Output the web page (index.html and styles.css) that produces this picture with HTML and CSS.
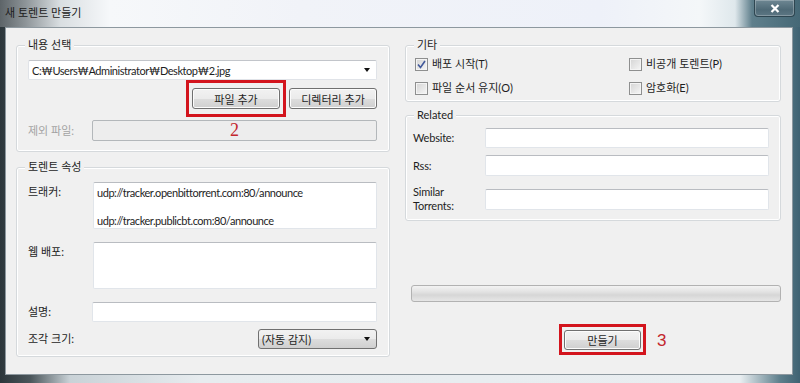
FILE: index.html
```html
<!DOCTYPE html>
<html lang="ko">
<head>
    <meta charset="UTF-8">
    <meta name="viewport" content="width=device-width, initial-scale=1.0">
    <title>새 토렌트 만들기</title>
    <link rel="stylesheet" href="styles.css">
</head>
<body>
    <div class="window">
        <div class="titlebar">
            <span class="title">새 토렌트 만들기</span>
            <div class="close">
                <svg width="10" height="9" viewBox="0 0 10 9"><path d="M1.5 1 L8.5 8 M8.5 1 L1.5 8" stroke="#fff" stroke-width="2.2"/></svg>
            </div>
        </div>

        <div class="client">
            <!-- 왼쪽 -->
            <div class="col col-left">
                <fieldset class="group group-content">
                    <legend>내용 선택</legend>
                    <div class="combo">
                        <span class="latin">C:₩Users₩Administrator₩Desktop₩2.jpg</span>
                        <span class="arrow"></span>
                    </div>
                    <div class="btn-row">
                        <button class="btn marked mark-file">파일 추가</button>
                        <button class="btn">디렉터리 추가</button>
                    </div>
                    <div class="row">
                        <label class="lbl muted">제외 파일:</label>
                        <div class="field field-disabled"><span class="note">2</span></div>
                    </div>
                </fieldset>

                <fieldset class="group group-props">
                    <legend>토렌트 속성</legend>
                    <div class="row row-top">
                        <label class="lbl">트래커:</label>
                        <textarea class="area latin">udp://tracker.openbittorrent.com:80/announce

udp://tracker.publicbt.com:80/announce</textarea>
                    </div>
                    <div class="row row-top row-gap">
                        <label class="lbl">웹 배포:</label>
                        <textarea class="area"></textarea>
                    </div>
                    <div class="row row-gap">
                        <label class="lbl">설명:</label>
                        <input class="field" type="text">
                    </div>
                    <div class="row row-piece">
                        <label class="lbl">조각 크기:</label>
                        <div class="select">
                            <span>(자동 감지)</span>
                            <span class="arrow"></span>
                        </div>
                    </div>
                </fieldset>
            </div>

            <!-- 오른쪽 -->
            <div class="col col-right">
                <fieldset class="group group-etc">
                    <legend>기타</legend>
                    <div class="checks">
                        <label class="check">
                            <span class="box">
                                <svg width="11" height="11" viewBox="0 0 11 11"><path d="M2 5.5 L4.5 8.5 L9 2" fill="none" stroke="#41589a" stroke-width="1.6"/></svg>
                            </span>
                            배포 시작(T)
                        </label>
                        <label class="check"><span class="box"></span>비공개 토렌트(P)</label>
                        <label class="check"><span class="box"></span>파일 순서 유지(O)</label>
                        <label class="check"><span class="box"></span>암호화(E)</label>
                    </div>
                </fieldset>

                <fieldset class="group group-related">
                    <legend>Related</legend>
                    <div class="row">
                        <label class="lbl lbl-wide">Website:</label>
                        <input class="field" type="text">
                    </div>
                    <div class="row row-rss">
                        <label class="lbl lbl-wide">Rss:</label>
                        <input class="field field-tall" type="text">
                    </div>
                    <div class="row row-similar">
                        <label class="lbl lbl-wide lbl-two">Similar<br>Torrents:</label>
                        <input class="field field-tall" type="text">
                    </div>
                </fieldset>

                <div class="progress"></div>

                <div class="make-row">
                    <button class="btn btn-make marked mark-make">만들기</button>
                    <span class="note note-3">3</span>
                </div>
            </div>
        </div>
    </div>
</body>
</html>
```

FILE: styles.css
```css
body {
    margin: 0;
    font-family: Lato, "Noto Sans CJK KR", sans-serif;
    font-size: 11px;
    color: #1e1e1e;
    overflow: hidden;
}
.window {
    width: 800px;
    height: 383px;
    display: flex;
    flex-direction: column;
    background: linear-gradient(to right, #2c363b 0, #4a555a 30px, #c9d2d7 70px, #e7ecef 200px, #e9eef1 740px, #5e7f8c 780px, #3f6272 800px);
}
.titlebar {
    height: 27px;
    display: flex;
    align-items: flex-start;
    background: linear-gradient(to right, #5d6468 0, #8c9397 25px, #d9dee1 60px, #f6f8fa 110px, #f1f3f8 300px, #eef1f9 600px, #f4f7f9 700px, #dfe8ec 735px, #5f7f8c 752px, #456876 800px);
}
.title {
    padding-left: 5px;
    line-height: 26px;
    font-size: 11px;
    color: #1b1b1b;
}
.close {
    margin-left: auto;
    margin-right: 5px;
    width: 41px;
    height: 17px;
    box-sizing: border-box;
    display: flex;
    align-items: center;
    justify-content: center;
    background: linear-gradient(#6e8793, #4f6a77 60%, #5c7683);
    border: 1px solid #2e4651;
    border-top: none;
    border-radius: 0 0 4px 4px;
    box-shadow: inset 0 0 0 1px rgba(255,255,255,0.25);
}
.client {
    flex: 1;
    margin: 0 7px 8px 5px;
    background-color: #f0f0f0;
    border: 1px solid #8d989f;
    display: flex;
    padding: 9px 0 0 10px;
    gap: 15px;
}
.col {
    display: flex;
    flex-direction: column;
}
.col-left {
    width: 374px;
}
.col-right {
    width: 376px;
}
.latin {
    letter-spacing: -0.45px;
}

/* 그룹 상자 */
.group {
    margin: 0;
    border: 1px solid #d5d9dc;
    border-radius: 3px;
    box-shadow: inset 0 0 0 1px #ffffff;
    padding: 7px 12px 10px 11px;
    min-width: 0;
}
.group legend {
    padding: 0 3px;
    margin-left: -3px;
    line-height: 16px;
    background-color: #f0f0f0;
}
.group-props {
    margin-top: 7px;
    padding-bottom: 7px;
}
.group-etc {
    padding: 3px 10px 5px 9px;
}
.group-etc legend {
    margin-left: -1px;
}
.group-related {
    margin-top: 5px;
    padding: 5px 11px 7px 7px;
}
.group-related legend {
    margin-left: 1px;
}

/* 콤보, 입력 */
.combo {
    height: 20px;
    box-sizing: border-box;
    display: flex;
    align-items: center;
    justify-content: space-between;
    padding: 0 6px 0 3px;
    background-color: #fff;
    border: 1px solid #e0e3e8;
    border-top-color: #c2c5ca;
    border-radius: 2px;
}
.arrow {
    width: 0;
    height: 0;
    border-top: 4px solid #111;
    border-left: 3.5px solid transparent;
    border-right: 3.5px solid transparent;
}
.btn-row {
    display: flex;
    justify-content: flex-end;
    gap: 9px;
    margin-top: 8px;
}
.btn {
    position: relative;
    width: 88px;
    height: 21px;
    padding: 0;
    font-family: inherit;
    font-size: 11px;
    color: #1e1e1e;
    border: 1px solid #707070;
    border-radius: 3px;
    background: linear-gradient(#f2f2f2 0, #ebebeb 50%, #dddddd 51%, #cfcfcf 100%);
    box-shadow: inset 0 0 0 1px #fcfcfc;
}
.marked::after {
    content: '';
    position: absolute;
    border: 3px solid #d3141d;
}
.mark-file::after {
    inset: -9px -7px;
}
.mark-make::after {
    inset: -7px -6px -6px -6px;
}
.row {
    display: flex;
    align-items: center;
    margin-top: 11px;
}
.row-top {
    align-items: flex-start;
    margin-top: 0;
}
.row-gap {
    margin-top: 13px;
}
.row-piece {
    margin-top: 7px;
    justify-content: space-between;
}
.group-related .row {
    margin-top: 0;
}
.group-related .row-rss {
    margin-top: 7px;
}
.group-related .row-similar {
    margin-top: 9px;
}
.lbl {
    width: 64px;
    flex-shrink: 0;
    line-height: 16px;
}
.row-top .lbl {
    padding-top: 2px;
    width: 65px;
}
.lbl-wide {
    width: 72px;
    letter-spacing: -0.2px;
}
.lbl-two {
    line-height: 14px;
}
.muted {
    color: #a3a3a3;
}
.field {
    flex: 1;
    height: 20px;
    box-sizing: border-box;
    margin: 0;
    background-color: #fff;
    border: 1px solid #e1e5ea;
    border-top-color: #b9bcc1;
    border-radius: 2px;
    font-family: inherit;
    font-size: 11px;
}
.field-tall {
    height: 21px;
}
.field-disabled {
    height: 21px;
    background-color: #ededed;
    border: 1px solid #b3b7ba;
    text-align: center;
}
.area {
    flex: 1;
    height: 47px;
    box-sizing: border-box;
    margin: 0;
    padding: 3px 3px 1px;
    resize: none;
    overflow: hidden;
    font-family: inherit;
    font-size: 11px;
    line-height: 14px;
    color: #1e1e1e;
    background-color: #fff;
    border: 1px solid #e1e5ea;
    border-top-color: #b9bcc1;
    border-radius: 2px;
}
.select {
    width: 119px;
    height: 20px;
    box-sizing: border-box;
    display: flex;
    align-items: center;
    justify-content: space-between;
    padding: 0 6px 0 3px;
    border: 1px solid #707070;
    border-radius: 3px;
    background: linear-gradient(#f2f2f2 0, #ebebeb 50%, #dddddd 51%, #cfcfcf 100%);
}
.note {
    font-family: "Liberation Serif", serif;
    font-size: 18px;
    line-height: 19px;
    color: #c3272d;
}

/* 체크박스 */
.checks {
    display: grid;
    grid-template-columns: 214px 1fr;
    row-gap: 8px;
}
.check {
    display: flex;
    align-items: center;
    gap: 4px;
    line-height: 16px;
}
.box {
    width: 13px;
    height: 13px;
    box-sizing: border-box;
    display: flex;
    align-items: center;
    justify-content: center;
    border: 1px solid #8e8f8f;
    background: linear-gradient(135deg, #d4d4d4, #f6f6f6);
    box-shadow: inset 0 0 0 1px #f4f4f4;
}

/* 진행, 만들기 */
.progress {
    margin: 64px 0 0 6px;
    height: 17px;
    box-sizing: border-box;
    border: 1px solid #b2b2b2;
    border-radius: 3px;
    background: linear-gradient(#f3f3f3, #e2e2e2 40%, #d6d6d6 60%, #e6e6e6);
}
.make-row {
    display: flex;
    align-items: center;
    gap: 16px;
    margin: 28px 0 0 159px;
}
.btn-make {
    width: 77px;
    height: 20px;
}
.note-3 {
    font-family: "Liberation Sans", sans-serif;
    font-size: 17px;
}
```
